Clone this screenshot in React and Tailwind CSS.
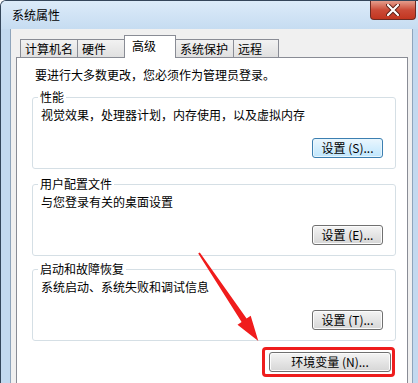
import React from "react";

const tabs = [
  { label: "计算机名", w: "w-[58px]" },
  { label: "硬件", w: "w-[48px]" },
  { label: "高级", w: "w-[52px]", active: true },
  { label: "系统保护", w: "w-[59px]" },
  { label: "远程", w: "w-[46px]" },
];

const WinButton = ({ label, focused, className = "" }) => (
  <button
    className={
      "h-[20px] rounded-[3px] border text-[12px] leading-[16px] text-black " +
      (focused
        ? "border-[#3c7fb1] bg-gradient-to-b from-[#eaf6fd] to-[#bee6fd] shadow-[inset_0_0_0_1px_#e8f6fd] "
        : "border-[#707070] bg-gradient-to-b from-[#f4f4f4] to-[#d6d6d6] shadow-[inset_0_0_0_1px_#fcfcfc] ") +
      className
    }
  >
    {label}
  </button>
);

const GroupBox = ({ title, text, button, focused, className = "" }) => (
  <fieldset
    className={
      "w-[364px] rounded-[3px] border border-[#d5dfe5] px-[8px] pb-[10px] pr-[12px] " +
      className
    }
  >
    <legend className="ml-[-3px] px-[2px] leading-[16px]">{title}</legend>
    <p className="mt-[2px] leading-[16px]">{text}</p>
    <div className="mt-[15px] flex justify-end">
      <WinButton label={button} focused={focused} className="w-[71px]" />
    </div>
  </fieldset>
);

export default function App() {
  return (
    <div className="relative flex h-[383px] w-[418px] flex-col overflow-hidden rounded-tl-[6px] border-l border-t border-[#34465a] bg-[#c3d9ef] font-['Noto_Sans_CJK_SC',sans-serif] text-[12px] text-black">
      {/* title bar */}
      <div className="flex h-[28px] items-start bg-gradient-to-b from-[#dcebf9] to-[#c6dcf1]">
        <span className="pl-[11px] pt-[6px] leading-[16px]">系统属性</span>
        <div className="ml-auto mr-[2px] flex h-[19px] w-[46px] items-center justify-center rounded-b-[4px] border border-t-0 border-[#6d2a22] bg-gradient-to-b from-[#e49c8c] via-[#cb4a37] to-[#c2351f]">
          <svg width="14" height="12" viewBox="0 0 14 12">
            <path d="M2 1 L12 11 M12 1 L2 11" stroke="#5a1e16" strokeWidth="4" strokeLinecap="round" />
            <path d="M2 1 L12 11 M12 1 L2 11" stroke="#ffffff" strokeWidth="2.2" strokeLinecap="round" />
          </svg>
        </div>
      </div>

      {/* client area */}
      <div className="ml-[9px] mr-[5px] flex flex-1 flex-col border-x border-[#8ea4bb] bg-[#f0f0f0] pl-[5px] pr-[4px] pt-[6px]">
        <div className="ml-[5px] -mb-px flex items-end">
          {tabs.map((t) => (
            <div
              key={t.label}
              className={
                "-ml-px border border-[#898c95] leading-[16px] " +
                t.w +
                (t.active
                  ? " relative z-10 h-[23px] border-b-0 bg-white pl-[7px] pt-[2px]"
                  : " h-[19px] bg-gradient-to-b from-[#f2f2f2] to-[#e0e0e0] pl-[4px] pt-[1px]")
              }
            >
              {t.label}
            </div>
          ))}
        </div>

        <div className="flex-1 border border-b-0 border-[#898c95] bg-white pt-[9px]">
          <p className="pl-[18px] leading-[16px]">
            要进行大多数更改，您必须作为管理员登录。
          </p>
          <div className="pl-[15px]">
            <GroupBox
              className="mt-[6px]"
              title="性能"
              text="视觉效果，处理器计划，内存使用，以及虚拟内存"
              button="设置 (S)..."
              focused
            />
            <GroupBox
              className="mt-[7px]"
              title="用户配置文件"
              text="与您登录有关的桌面设置"
              button="设置 (E)..."
            />
            <GroupBox
              className="mt-[5px]"
              title="启动和故障恢复"
              text="系统启动、系统失败和调试信息"
              button="设置 (T)..."
            />
          </div>
          <div className="mr-[12px] mt-[6px] flex justify-end">
            <div className="rounded-[4px] border-[3px] border-[#ee1d1d] pb-[2px] pl-[4px] pr-[1px] pt-[2px]">
              <WinButton label="环境变量 (N)..." className="w-[122px]" />
            </div>
          </div>
        </div>
      </div>

      {/* red annotation arrow */}
      <svg className="pointer-events-none absolute left-[-1px] top-[-1px]" width="418" height="383">
        <polygon
          points="199.8,252.4 246.6,318.5 250.7,315.7 258.3,341 237.5,324.7 241.6,321.9 198.2,253.6"
          fill="#f01c1c"
        />
      </svg>
    </div>
  );
}
